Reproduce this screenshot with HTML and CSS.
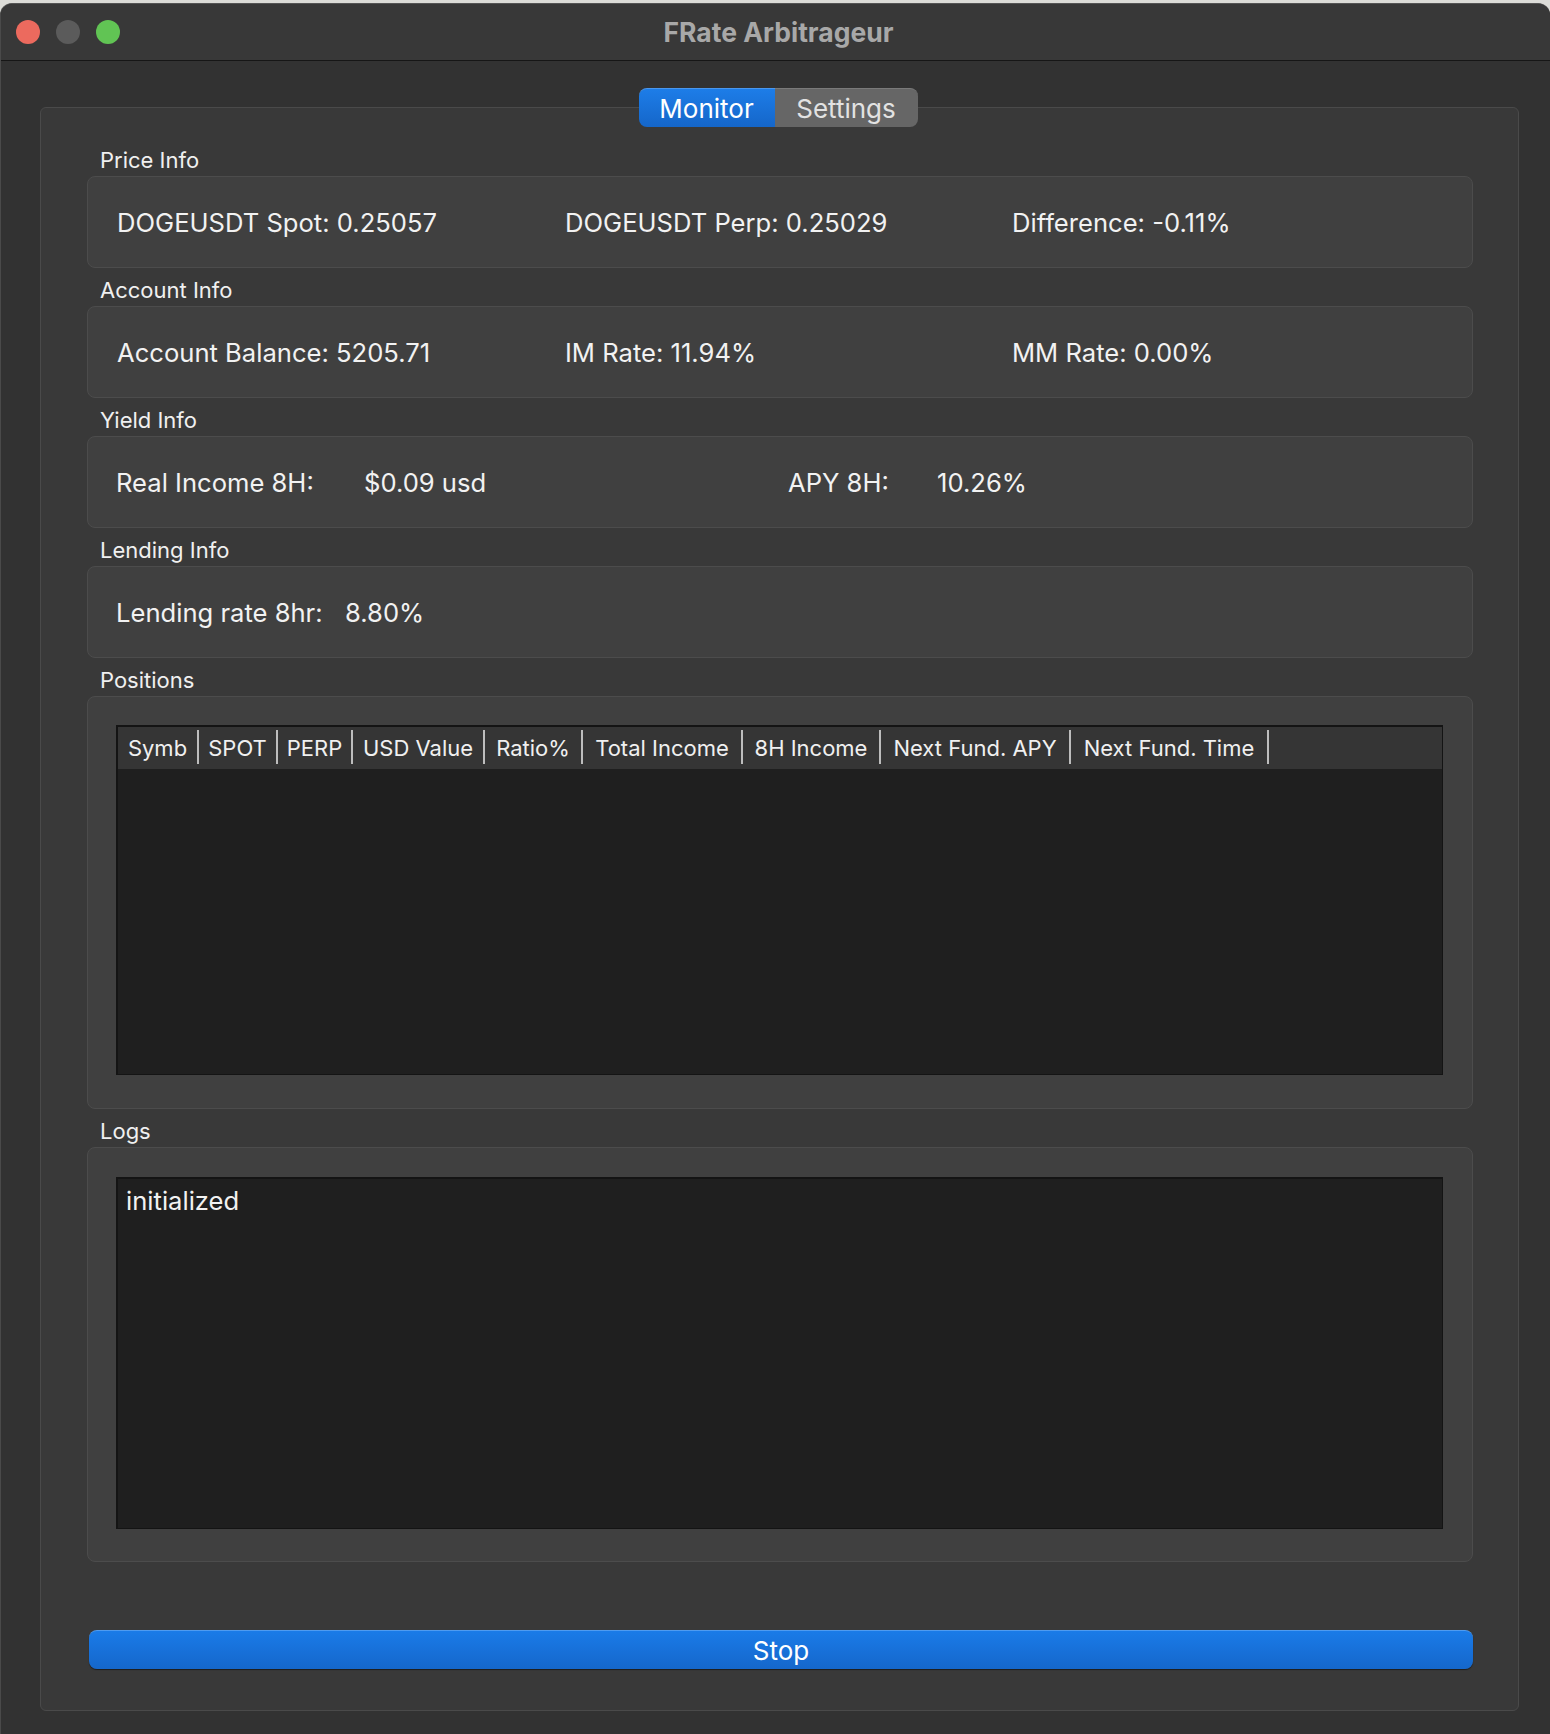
FILE: index.html
```html
<!DOCTYPE html>
<html>
<head>
<meta charset="utf-8">
<title>FRate Arbitrageur</title>
<link rel="stylesheet" href="styles.css">
</head>
<body>
<div class="window">
  <div class="titlebar">
    <div class="lights">
      <span class="light red"></span>
      <span class="light gray"></span>
      <span class="light green"></span>
    </div>
    <div class="title">FRate Arbitrageur</div>
    <div class="spacer"></div>
  </div>
  <div class="content">
    <div class="tabs">
      <div class="tab active">Monitor</div>
      <div class="tab">Settings</div>
    </div>
    <div class="pane">
      <section class="group">
        <div class="group-title">Price Info</div>
        <div class="box info three">
          <span>DOGEUSDT Spot: 0.25057</span>
          <span>DOGEUSDT Perp: 0.25029</span>
          <span>Difference: -0.11%</span>
        </div>
      </section>
      <section class="group">
        <div class="group-title">Account Info</div>
        <div class="box info three">
          <span>Account Balance: 5205.71</span>
          <span>IM Rate: 11.94%</span>
          <span>MM Rate: 0.00%</span>
        </div>
      </section>
      <section class="group">
        <div class="group-title">Yield Info</div>
        <div class="box info yield">
          <span>Real Income 8H:</span>
          <span>$0.09 usd</span>
          <span>APY 8H:</span>
          <span>10.26%</span>
        </div>
      </section>
      <section class="group">
        <div class="group-title">Lending Info</div>
        <div class="box info lending">
          <span>Lending rate 8hr:</span>
          <span>8.80%</span>
        </div>
      </section>
      <section class="group">
        <div class="group-title">Positions</div>
        <div class="box positions">
          <div class="table">
            <div class="thead">
              <div class="th c1">Symb</div>
              <div class="th c2">SPOT</div>
              <div class="th c3">PERP</div>
              <div class="th c4">USD Value</div>
              <div class="th c5">Ratio%</div>
              <div class="th c6">Total Income</div>
              <div class="th c7">8H Income</div>
              <div class="th c8">Next Fund. APY</div>
              <div class="th c9">Next Fund. Time</div>
            </div>
            <div class="tbody"></div>
          </div>
        </div>
      </section>
      <section class="group">
        <div class="group-title">Logs</div>
        <div class="box logs">
          <div class="logtext">initialized</div>
        </div>
      </section>
      <button class="stop">Stop</button>
    </div>
  </div>
</div>
</body>
</html>
```

FILE: styles.css
```css
* { box-sizing: border-box; }

html, body {
  margin: 0;
  padding: 0;
}

body {
  background: #dcdcd8;
  font-family: "Inter", "Liberation Sans", sans-serif;
  color: #eeeeee;
  width: 1550px;
  height: 1734px;
  overflow: hidden;
  padding-top: 3px;
}

.window {
  width: 1550px;
  height: 1731px;
  background: #323232;
  border-radius: 12px 12px 0 0;
  overflow: hidden;
  border-left: 1px solid #4a4a4a;
  border-top: 1px solid #555555;
}

.titlebar {
  height: 57px;
  background: #383838;
  border-bottom: 1px solid #161616;
  display: grid;
  grid-template-columns: 1fr auto 1fr;
  align-items: center;
}

.lights {
  display: flex;
  gap: 16px;
  padding-left: 15px;
}

.light {
  width: 24px;
  height: 24px;
  border-radius: 50%;
  display: block;
}
.light.red { background: #ec6a5e; }
.light.gray { background: #5b5b5b; }
.light.green { background: #61c454; }

.title {
  font-weight: 700;
  font-size: 26.5px;
  color: #a8a8a8;
  padding-left: 6px;
}

.content {
  padding: 27px 31px 0 39px;
}

.tabs {
  display: flex;
  justify-content: center;
  position: relative;
  z-index: 1;
  margin-bottom: -20px;
  padding-right: 3px;
}

.tab {
  height: 39px;
  font-size: 26px;
  display: flex;
  align-items: center;
  justify-content: center;
  background: #666666;
  color: #e2e2e2;
  width: 143px;
  border-radius: 0 8px 8px 0;
  border-top: 1px solid #7a7a7a;
}

.tab.active {
  width: 136px;
  background: linear-gradient(#1d7de8, #1566c9);
  color: #ffffff;
  border-radius: 8px 0 0 8px;
  border-top: 1px solid #4a97ee;
}

.pane {
  background: #393939;
  border: 1px solid #4a4a4a;
  border-radius: 6px;
  height: 1604px;
  padding: 37px 45px 41px 46px;
  display: flex;
  flex-direction: column;
  gap: 7px;
}

.group {
  display: flex;
  flex-direction: column;
}

.group-title {
  height: 31px;
  line-height: 31px;
  font-size: 22px;
  padding-left: 13px;
  color: #f0f0f0;
}

.box {
  background: #404040;
  border: 1px solid #4c4c4c;
  border-radius: 8px;
}

.info {
  height: 92px;
  display: grid;
  align-items: center;
  font-size: 25.6px;
  color: #f2f2f2;
  padding-left: 29px;
}

.info.three {
  grid-template-columns: 448px 447px 1fr;
}

.info.yield {
  padding-left: 28px;
  grid-template-columns: 248px 424px 149px 1fr;
}

.info.lending {
  padding-left: 28px;
  grid-template-columns: 229px 1fr;
}

.positions {
  padding: 28px 29px 33px 28px;
}

.table {
  height: 350px;
  background: #1f1f1f;
  border-top: 2px solid #141414;
  border-left: 2px solid #141414;
  border-right: 1px solid #141414;
  border-bottom: 1px solid #141414;
  display: flex;
  flex-direction: column;
}

.thead {
  height: 42px;
  background: #353535;
  display: flex;
}

.th {
  height: 42px;
  display: flex;
  align-items: center;
  justify-content: center;
  padding-right: 2px;
  font-size: 22px;
  color: #f0f0f0;
  white-space: nowrap;
  background-image: linear-gradient(#bdbdbd, #bdbdbd);
  background-size: 2px 34px;
  background-position: right 3px;
  background-repeat: no-repeat;
}

.c1 { width: 81px; }
.c2 { width: 79px; }
.c3 { width: 75px; }
.c4 { width: 132px; }
.c5 { width: 98px; }
.c6 { width: 160px; }
.c7 { width: 138px; }
.c8 { width: 190px; }
.c9 { width: 198px; }

.tbody {
  flex: 1;
}

.logs {
  padding: 29px 29px 32px 28px;
}

.logtext {
  height: 352px;
  background: #1f1f1f;
  border-top: 2px solid #141414;
  border-left: 2px solid #141414;
  border-right: 1px solid #141414;
  border-bottom: 1px solid #141414;
  font-size: 25.6px;
  color: #f2f2f2;
  padding: 6px 8px;
  line-height: 31px;
}

.stop {
  margin-top: 61px;
  height: 40px;
  border: none;
  border-top: 1px solid #4f9bf0;
  border-radius: 8px;
  background: linear-gradient(#1a7be8, #1567cb);
  color: #ffffff;
  font-family: "Inter", "Liberation Sans", sans-serif;
  font-size: 26px;
  box-shadow: 0 1px 1px rgba(0,0,0,0.5);
  margin-left: 2px;
  width: calc(100% - 2px);
}
```
